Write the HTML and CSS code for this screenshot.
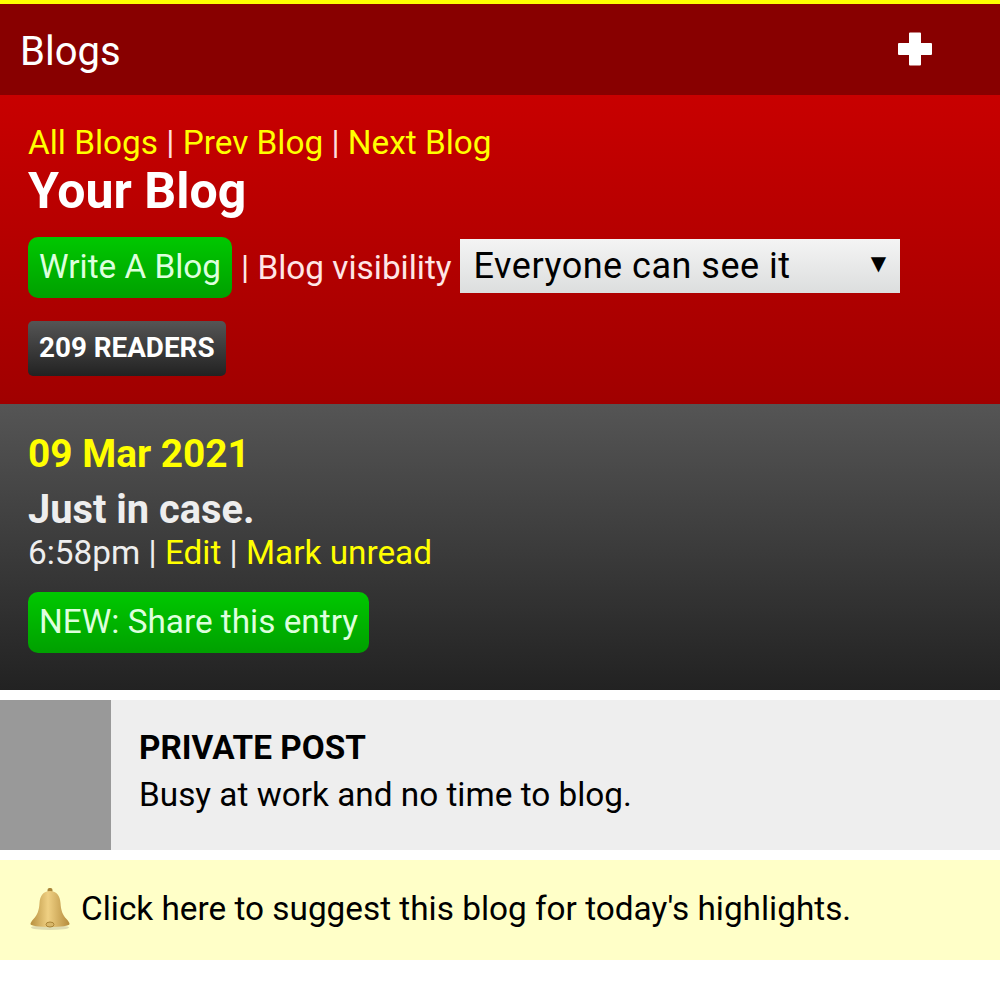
FILE: index.html
```html
<!DOCTYPE html>
<html lang="en">
<head>
  <meta charset="UTF-8" />
  <meta name="viewport" content="width=device-width, initial-scale=1.0"/>
  <title>Blogs</title>
  <link rel="stylesheet" href="styles.css">
</head>
<body>

  <header class="top-bar">
    <h1>Blogs</h1>
    <svg class="plus-icon" viewBox="0 0 36 36" width="36" height="36" aria-label="Add">
      <path d="M13 1.500Q12 1.500 12 2.500V12H2Q1 12 1 13v10q0 1 1 1H12v9.500q0 1 1 1h10q1 0 1-1V24h10q1 0 1-1V13q0-1-1-1H24V2.500q0-1-1-1z" fill="#fff"/>
    </svg>
  </header>

  <section class="blog-head">
    <p class="blog-nav">
      <a href="#">All Blogs</a> | <a href="#">Prev Blog</a> | <a href="#">Next Blog</a>
    </p>
    <h2>Your Blog</h2>
    <div class="blog-tools">
      <a class="green-btn" href="#">Write A Blog</a>
      <span class="visibility-label">| Blog visibility</span>
      <div class="fake-select">
        <span>Everyone can see it</span>
        <span class="arrow">▼</span>
      </div>
    </div>
    <a class="readers" href="#">209 READERS</a>
  </section>

  <section class="entry-head">
    <div class="entry-date">09 Mar 2021</div>
    <div class="entry-title">Just in case.</div>
    <p class="entry-meta">6:58pm | <a href="#">Edit</a> | <a href="#">Mark unread</a></p>
    <a class="green-btn share-btn" href="#">NEW: Share this entry</a>
  </section>

  <section class="private-post">
    <div class="private-side"></div>
    <div class="private-body">
      <strong>PRIVATE POST</strong>
      <p>Busy at work and no time to blog.</p>
    </div>
  </section>

  <section class="suggest">
    <svg class="bell-icon" viewBox="0 0 44 48" width="44" height="48" aria-hidden="true">
      <defs>
        <linearGradient id="bellFill" x1="0" y1="0" x2="1" y2="0">
          <stop offset="0" stop-color="#b8913f"/>
          <stop offset="0.45" stop-color="#efd083"/>
          <stop offset="1" stop-color="#b58c3c"/>
        </linearGradient>
      </defs>
      <ellipse cx="22" cy="41.500" rx="19" ry="2.500" fill="#c9c5a0" opacity="0.6"/>
      <rect x="19.500" y="2" width="5" height="5" rx="2" fill="#a98437"/>
      <path d="M22 5c-7 0-10 5-10.500 12-.4 7-2 12-6 16-2 2-3 4-3 5 0 2 9 3 19.500 3s19.500-1 19.500-3c0-1-1-3-3-5-4-4-5.600-9-6-16C32 10 29 5 22 5z" fill="url(#bellFill)"/>
      <ellipse cx="22" cy="38.500" rx="4" ry="2.500" fill="#d8b769" stroke="#a98437"/>
    </svg>
    <span>Click here to suggest this blog for today's highlights.</span>
  </section>

</body>
</html>
```

FILE: styles.css
```css
* {
  box-sizing: border-box;
  margin: 0;
  padding: 0;
}

body {
  font-family: Roboto, sans-serif;
  font-size: 33.330px;
  background-color: #fff;
  color: #000;
}

a {
  color: #ffff00;
  text-decoration: none;
}

.top-bar {
  height: 95px;
  border-top: 4px solid #ffff00;
  background-color: #880000;
  color: #fff;
  padding: 0 67px 0 20px;
  display: flex;
  align-items: center;
  justify-content: space-between;
}

.top-bar h1 {
  font-size: 40px;
  font-weight: 400;
  margin-top: 3px;
}

.plus-icon {
  display: block;
  margin-bottom: 2px;
}

.blog-head {
  height: 309px;
  padding: 29px 28px 0;
  background: linear-gradient(#c80000, #a00000);
  color: #fff;
}

.blog-nav {
  line-height: 38px;
  color: #ffdddd;
}

.blog-head h2 {
  font-size: 50px;
  font-weight: 700;
  line-height: 58px;
}

.blog-tools {
  display: flex;
  align-items: center;
  margin-top: 17px;
}

.green-btn {
  display: block;
  padding: 0 11px;
  height: 61px;
  line-height: 60px;
  border-radius: 10px;
  background: linear-gradient(#00c800, #00a000);
  color: #ddffdd;
}

.visibility-label {
  margin-left: 9px;
  color: #ffe6e6;
}

.fake-select {
  width: 440px;
  height: 54px;
  margin-left: 8px;
  margin-bottom: 4px;
  padding: 0 13px 0 14px;
  display: flex;
  align-items: center;
  justify-content: space-between;
  background: linear-gradient(#f4f4f4, #dcdede);
  color: #000;
  font-size: 36px;
  letter-spacing: 0.5px;
}

.arrow {
  font-family: "DejaVu Sans", sans-serif;
  font-size: 20px;
  margin-bottom: 6px;
}

.readers {
  display: inline-block;
  margin-top: 23px;
  height: 55px;
  line-height: 54px;
  padding: 0 11px;
  border-radius: 5px;
  background: linear-gradient(#555, #222);
  color: #fff;
  font-size: 27.800px;
  font-weight: 700;
}

.entry-head {
  height: 286px;
  padding: 28px 28px 0;
  background: linear-gradient(#555, #222);
  color: #eee;
}

.entry-date {
  color: #ffff00;
  font-size: 38.800px;
  font-weight: 700;
  line-height: 44px;
}

.entry-title {
  margin-top: 12px;
  font-size: 39.800px;
  font-weight: 700;
  line-height: 44px;
}

.entry-meta {
  line-height: 42px;
}

.share-btn {
  display: inline-block;
  margin-top: 18px;
}

.private-post {
  height: 150px;
  margin-top: 10px;
  display: flex;
  background-color: #eeeeee;
}

.private-side {
  width: 111px;
  background-color: #999;
}

.private-body {
  flex: 1;
  padding: 24px 28px 0;
  line-height: 47px;
}

.private-body strong {
  display: block;
}

.suggest {
  height: 100px;
  margin-top: 10px;
  padding: 0 0 4px 28px;
  display: flex;
  align-items: center;
  gap: 9px;
  background-color: #ffffc8;
}

.bell-icon {
  display: block;
  margin-top: 4px;
}
```
